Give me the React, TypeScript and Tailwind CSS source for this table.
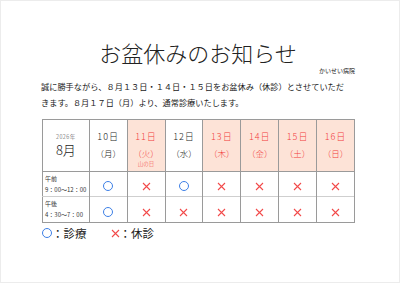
import React from "react";

const JP = { fontFamily: '"Noto Sans CJK JP", "Noto Sans", sans-serif' };

type Day = { num: string; wd: string; holiday?: boolean; note?: string; am: boolean; pm: boolean };

const DAYS: Day[] = [
  { num: "10日", wd: "（月）", am: true, pm: true },
  { num: "11日", wd: "（火）", holiday: true, note: "山の日", am: false, pm: false },
  { num: "12日", wd: "（水）", am: true, pm: false },
  { num: "13日", wd: "（木）", holiday: true, am: false, pm: false },
  { num: "14日", wd: "（金）", holiday: true, am: false, pm: false },
  { num: "15日", wd: "（土）", holiday: true, am: false, pm: false },
  { num: "16日", wd: "（日）", holiday: true, am: false, pm: false },
];

function Open() {
  return <span className="inline-block h-[10px] w-[10px] rounded-full border-[1.5px] border-[#3d7fe6]" />;
}

function Closed() {
  return (
    <svg width="9" height="9" viewBox="0 0 9 9" className="inline-block">
      <path d="M1 1L8 8M8 1L1 8" stroke="#f24a4a" strokeWidth="1.1" />
    </svg>
  );
}

export default function App() {
  return (
    <div className="w-[400px] h-[283px] bg-white border border-[#ececec] overflow-hidden text-[#1a1a1a]" style={JP}>
      <div className="ml-[40px] w-[314px]">
        <h1 className="pt-[37px] text-center text-[22px] leading-[28px] font-light text-[#222]">お盆休みのお知らせ</h1>
        <p className="mt-[1px] text-right text-[6px] leading-[8px]">かいせい病院</p>
        <p className="mt-[3px] text-[8.2px] leading-[16px] whitespace-nowrap">
          誠に勝手ながら、８月１３日・１４日・１５日をお盆休み（休診）とさせていただ
          <br />
          きます。８月１７日（月）より、通常診療いたします。
        </p>

        <table className="mt-[9px] ml-[1px] table-fixed border-collapse border border-[#9a9a9a]">
          <colgroup>
            <col className="w-[47px]" />
            {DAYS.map((d) => (
              <col key={d.num} className="w-[38px]" />
            ))}
          </colgroup>
          <thead>
            <tr className="h-[52px] border-b border-[#9a9a9a]">
              <th className="border-r border-[#9a9a9a] font-light text-center align-middle">
                <div className="text-[5.5px] leading-[8px] tracking-[0.5px] text-[#444]">2026年</div>
                <div className="mt-[1px] text-[13px] leading-[16px]">8月</div>
              </th>
              {DAYS.map((d) => (
                <th
                  key={d.num}
                  className={
                    d.holiday
                      ? "border-r border-[#9a9a9a] bg-[#fde3d7] text-[#f23c3c] font-light align-top"
                      : "border-r border-[#9a9a9a] font-light align-top"
                  }
                >
                  <div className="pt-[11px] text-[9px] leading-[12px] tracking-[1px]">{d.num}</div>
                  <div className="mt-[4px] text-[8.5px] leading-[12px]">{d.wd}</div>
                  {d.note && <div className="mt-[1px] text-[5.5px] leading-[8px]">{d.note}</div>}
                </th>
              ))}
            </tr>
          </thead>
          <tbody>
            <tr className="h-[25px] border-b border-[#cfcfcf]">
              <td className="border-r border-[#9a9a9a] pl-[2px] align-top text-[6px] leading-[11px] text-[#333]">
                <div className="pt-[1px]">午前</div>
                <div>9：00～12：00</div>
              </td>
              {DAYS.map((d) => (
                <td key={d.num} className="border-r border-[#9a9a9a] text-center align-middle leading-none">
                  {d.am ? <Open /> : <Closed />}
                </td>
              ))}
            </tr>
            <tr className="h-[26px]">
              <td className="border-r border-[#9a9a9a] pl-[2px] align-top text-[6px] leading-[11px] text-[#333]">
                <div className="pt-[1px]">午後</div>
                <div>4：30～7：00</div>
              </td>
              {DAYS.map((d) => (
                <td key={d.num} className="border-r border-[#9a9a9a] text-center align-middle leading-none">
                  {d.pm ? <Open /> : <Closed />}
                </td>
              ))}
            </tr>
          </tbody>
        </table>

        <div className="mt-[3px] ml-[1px] flex items-center h-[14px] text-[11.5px] leading-[14px]">
          <Open />
          <span>：診療</span>
          <span className="ml-[24px] flex items-center">
            <Closed />
          </span>
          <span>：休診</span>
        </div>
      </div>
    </div>
  );
}
